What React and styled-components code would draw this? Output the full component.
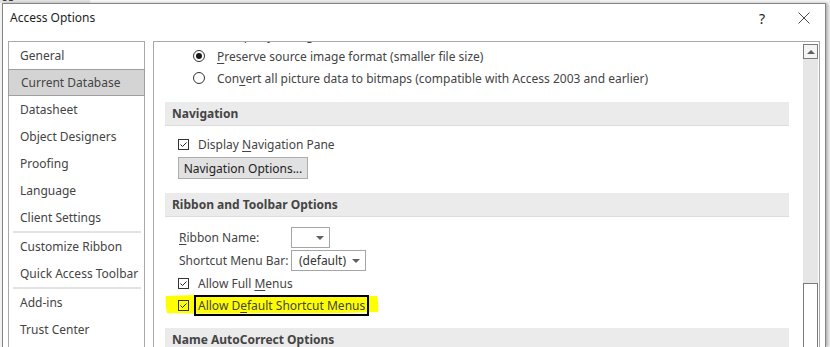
import React from 'react';
import styled, { createGlobalStyle } from 'styled-components';

const Global = createGlobalStyle`
  html, body { margin: 0; padding: 0; background: #f0f0f0; overflow: hidden; }
  body { font-family: "Noto Sans", "Open Sans", sans-serif; }
`;

const Screen = styled.div`
  width: 830px;
  height: 347px;
  overflow: hidden;
  display: flex;
  flex-direction: column;
  background: #f3f3f3;
`;

const BehindStrip = styled.div`
  height: 3px;
  display: flex;
  overflow: hidden;
  flex-shrink: 0;
`;

const BehindPart = styled.div`
  width: ${p => p.$w}px;
  background: ${p => p.$bg};
  overflow: hidden;
  font-size: 12px;
  line-height: 12px;
  color: #333;
`;

const BehindText = styled.div`
  margin-top: -9px;
  padding-left: 1px;
`;

const Dialog = styled.div`
  margin-left: 2px;
  width: 822px;
  flex: 1;
  min-height: 0;
  border: 1px solid #858585;
  border-bottom: none;
  background: #fff;
  box-shadow: 2px 0 3px rgba(0, 0, 0, 0.28);
  display: flex;
  flex-direction: column;
`;

const TitleBar = styled.div`
  height: 37px;
  box-sizing: border-box;
  flex-shrink: 0;
  display: flex;
  align-items: flex-start;
  justify-content: space-between;
  padding: 3px 0 0 7px;
`;

const Title = styled.div`
  font-size: 12px;
  line-height: 22px;
  color: #1e1e1e;
`;

const TitleButtons = styled.div`
  display: flex;
  gap: 6px;
  padding-right: 3px;
  align-items: center;
`;

const TitleButton = styled.div`
  width: 36px;
  height: 22px;
  display: flex;
  align-items: center;
  justify-content: center;
  font-size: 14px;
  color: #222;
`;

const Body = styled.div`
  flex: 1;
  min-height: 0;
  display: flex;
  gap: 8px;
  padding: 0 5px;
`;

const NavPanel = styled.div`
  width: 135px;
  border: 1px solid #a9a9a9;
  border-bottom: none;
  display: flex;
  flex-direction: column;
`;

const NavItem = styled.div`
  height: 27px;
  flex-shrink: 0;
  box-sizing: border-box;
  display: flex;
  align-items: center;
  font-size: 12px;
  color: #444;
  white-space: pre;
  background: ${p => (p.$selected ? '#d4d4d4' : 'transparent')};
  border: ${p => (p.$selected ? '1px solid #9e9e9e' : 'none')};
  margin: ${p => (p.$selected ? '0 -1px' : '0')};
  padding-left: ${p => (p.$selected ? 12 : 11)}px;
`;

const NavSeparator = styled.div`
  height: 2px;
  flex-shrink: 0;
  margin: 0 3px 0 4px;
  background: #e3e3e3;
`;

const ContentPanel = styled.div`
  flex: 1;
  border: 1px solid #a9a9a9;
  border-bottom: none;
  display: flex;
  overflow: hidden;
`;

const Content = styled.div`
  flex: 1;
  overflow: hidden;
  display: flex;
  flex-direction: column;
  font-size: 12px;
  color: #444;
  & > * { flex-shrink: 0; }
`;

const ClippedLine = styled.div`
  margin-top: -16px;
  height: 19px;
  line-height: 19px;
  padding-left: 28px;
  white-space: nowrap;
`;

const RadioRow = styled.div`
  height: 22px;
  display: flex;
  align-items: center;
  gap: 12px;
  padding-left: 39px;
  white-space: nowrap;
`;

const Radio = styled.span`
  width: 12px;
  height: 12px;
  box-sizing: border-box;
  border-radius: 50%;
  border: 1px solid #333;
  display: flex;
  align-items: center;
  justify-content: center;
  flex-shrink: 0;
  &::after {
    content: '';
    width: 6px;
    height: 6px;
    border-radius: 50%;
    background: ${p => (p.$checked ? '#1a1a1a' : 'transparent')};
  }
`;

const Band = styled.div`
  margin: ${p => p.$top}px 14px 0 11px;
  height: 23px;
  background: #ebebeb;
  border-bottom: 1px solid #dcdcdc;
  display: flex;
  align-items: center;
  padding-left: 7px;
  font-weight: bold;
  color: #444;
  white-space: nowrap;
`;

const CheckRow = styled.div`
  position: relative;
  height: 22px;
  margin-top: ${p => p.$top || 0}px;
  display: flex;
  align-items: center;
  gap: 5px;
  padding-left: 24px;
  white-space: nowrap;
`;

const CheckBox = styled.span`
  position: relative;
  width: 11px;
  height: 11px;
  box-sizing: border-box;
  border: 1px solid #333;
  display: flex;
  flex-shrink: 0;
  svg { display: block; }
`;

const CheckLabel = styled.span`
  position: relative;
  display: inline-block;
  height: 21px;
  line-height: 17px;
  box-sizing: border-box;
  padding: 0 2px;
  border: 2px solid ${p => (p.$boxed ? '#000' : 'transparent')};
  white-space: pre;
`;

const Highlight = styled.svg`
  position: absolute;
  left: 11px;
  top: 0;
`;

const Button = styled.div`
  margin: 2px 0 0 24px;
  width: 130px;
  height: 22px;
  box-sizing: border-box;
  border: 1px solid #adadad;
  background: #e1e1e1;
  display: flex;
  align-items: center;
  justify-content: center;
  color: #222;
`;

const FieldRow = styled.div`
  margin-top: ${p => p.$top}px;
  height: 21px;
  display: flex;
  align-items: center;
  padding-left: 25px;
  white-space: nowrap;
`;

const FieldLabel = styled.span`
  width: 112px;
  white-space: pre;
`;

const Combo = styled.div`
  width: ${p => p.$w}px;
  height: 21px;
  box-sizing: border-box;
  border: 1px solid #a5a5a5;
  background: #fff;
  display: flex;
  align-items: center;
  justify-content: space-between;
  padding: 0 5px 0 7px;
  color: #333;
`;

const ComboArrow = styled.span`
  width: 0;
  height: 0;
  border-left: 4px solid transparent;
  border-right: 4px solid transparent;
  border-top: 4px solid #606060;
`;

const Scrollbar = styled.div`
  width: 15px;
  margin: 2px 1px 0 0;
  display: flex;
  flex-direction: column;
  flex-shrink: 0;
`;

const ScrollButton = styled.div`
  height: 15px;
  flex-shrink: 0;
  box-sizing: border-box;
  border: 1px solid #7a7a7a;
  background: #f4f4f4;
  display: flex;
  align-items: center;
  justify-content: center;
  &::after {
    content: '';
    border-left: 4px solid transparent;
    border-right: 4px solid transparent;
    border-bottom: 4px solid #606060;
  }
`;

const ScrollTrack = styled.div`
  height: 224px;
  flex-shrink: 0;
  background: #e6e6e6;
`;

const ScrollThumb = styled.div`
  flex: 1;
  border: 1px solid #7a7a7a;
  border-bottom: none;
  background: #fff;
`;

const U = styled.span`
  text-decoration: underline;
  text-underline-offset: 2px;
`;

const Check = ({ checked = true }) => (
  <CheckBox>
    {checked && (
      <svg width="9" height="9" viewBox="0 0 9 9">
        <path d="M1.5 4.5 L3.5 6.5 L7.5 2.5" fill="none" stroke="#222" strokeWidth="1" />
      </svg>
    )}
  </CheckBox>
);

const navItems = [
  ['General'],
  ['Current Database', true],
  ['Datasheet'],
  ['Object Designers'],
  ['Proofing'],
  ['Language'],
  ['Client Settings'],
  '-',
  ['Customize Ribbon'],
  ['Quick Access Toolbar'],
  '-',
  ['Add-ins'],
  ['Trust Center'],
];

export default function App() {
  return (
    <>
      <Global />
      <Screen>
        <BehindStrip>
          <BehindPart $w={90} $bg="#e4e4e4"><BehindText>os</BehindText></BehindPart>
          <BehindPart $w={110} $bg="#fafafa" />
          <BehindPart $w={400} $bg="#ededed" />
          <BehindPart $w={230} $bg="#f6f6f6" />
        </BehindStrip>
        <Dialog>
          <TitleBar>
            <Title>Access Options</Title>
            <TitleButtons>
              <TitleButton>?</TitleButton>
              <TitleButton>
                <svg width="12" height="12" viewBox="0 0 12 12">
                  <path d="M0.5 0.5 L11.5 11.5 M11.5 0.5 L0.5 11.5" stroke="#333" strokeWidth="0.9" />
                </svg>
              </TitleButton>
            </TitleButtons>
          </TitleBar>
          <Body>
            <NavPanel>
              {navItems.map((it, i) =>
                it === '-' ? (
                  <NavSeparator key={i} />
                ) : (
                  <NavItem key={i} $selected={!!it[1]}>{it[0]}</NavItem>
                )
              )}
            </NavPanel>
            <ContentPanel>
              <Content>
                <ClippedLine>Picture Property Storage Format</ClippedLine>
                <RadioRow>
                  <Radio $checked />
                  <span><U>P</U>reserve source image format (smaller file size)</span>
                </RadioRow>
                <RadioRow>
                  <Radio />
                  <span>Con<U>v</U>ert all picture data to bitmaps (compatible with Access 2003 and earlier)</span>
                </RadioRow>
                <Band $top={13}>Navigation</Band>
                <CheckRow $top={7}>
                  <Check />
                  <CheckLabel>Display <U>N</U>avigation Pane</CheckLabel>
                </CheckRow>
                <Button>Navigation Options...</Button>
                <Band $top={14}>Ribbon and Toolbar Options</Band>
                <FieldRow $top={10}>
                  <FieldLabel><U>R</U>ibbon Name:</FieldLabel>
                  <Combo $w={39}><span /><ComboArrow /></Combo>
                </FieldRow>
                <FieldRow $top={2}>
                  <FieldLabel>Shortcut Menu Bar:</FieldLabel>
                  <Combo $w={75}><span>(default)</span><ComboArrow /></Combo>
                </FieldRow>
                <CheckRow $top={1}>
                  <Check />
                  <CheckLabel>Allow Full <U>M</U>enus</CheckLabel>
                </CheckRow>
                <CheckRow>
                  <Highlight width="214" height="20" viewBox="0 0 214 20">
                    <path
                      d="M1 2 Q40 0 90 1 Q150 0 212 2 Q214 10 213 18 Q160 20 100 19 Q50 20 2 19 Q0 10 1 2 Z"
                      fill="#ffff00"
                    />
                  </Highlight>
                  <Check />
                  <CheckLabel $boxed>Allow D<U>e</U>fault Shortcut Menus</CheckLabel>
                </CheckRow>
                <Band $top={12}>Name AutoCorrect Options</Band>
              </Content>
              <Scrollbar>
                <ScrollButton />
                <ScrollTrack />
                <ScrollThumb />
              </Scrollbar>
            </ContentPanel>
          </Body>
        </Dialog>
      </Screen>
    </>
  );
}
